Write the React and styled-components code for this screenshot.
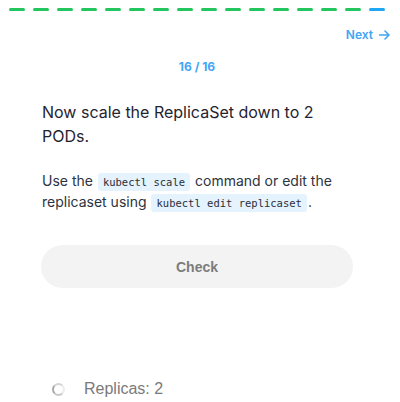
import React from "react";
import styled, { createGlobalStyle } from "styled-components";

const Global = createGlobalStyle`
  html, body { margin: 0; padding: 0; background: #ffffff; }
  body { font-family: Inter, "Noto Sans", sans-serif; -webkit-font-smoothing: antialiased; }
`;

const Page = styled.div`
  width: 400px;
  height: 402px;
  overflow: hidden;
  display: flex;
  flex-direction: column;
`;

const Progress = styled.div`
  display: flex;
  gap: 8px;
  padding: 8px 0 0 9px;
`;

const Dash = styled.span`
  width: 16px;
  height: 3px;
  border-radius: 2px;
  background: ${(p) => (p.$current ? "#1fa6f5" : "#22c55e")};
`;

const TopBar = styled.div`
  display: flex;
  justify-content: flex-end;
  padding: 16px 10px 0 0;
`;

const NextLink = styled.a`
  display: flex;
  align-items: center;
  gap: 6px;
  font-family: Inter, sans-serif;
  font-size: 12px;
  font-weight: 600;
  line-height: 16px;
  color: #42a5f5;
  text-decoration: none;
`;

const Content = styled.div`
  width: 312px;
  margin-left: 41px;
  display: flex;
  flex-direction: column;
`;

const Counter = styled.div`
  margin-top: 16px;
  text-align: center;
  font-size: 12px;
  font-weight: 700;
  line-height: 16px;
  color: #42a5f5;
`;

const Question = styled.h2`
  margin: 25px 0 0 1px;
  font-size: 16px;
  font-weight: 400;
  line-height: 24px;
  color: #1f2430;
`;

const Hint = styled.p`
  margin: 22px 0 0 1px;
  font-size: 14px;
  line-height: 21px;
  color: #2d3340;
`;

const Code = styled.code`
  display: inline-block;
  font-family: "DejaVu Sans Mono", monospace;
  font-size: 10.5px;
  line-height: 14px;
  color: #2a2f3a;
  background: #e4f3fd;
  border-radius: 3px;
  padding: 2px 5px;
  margin: 0 1px;
`;

const CheckButton = styled.button`
  margin-top: 33px;
  height: 43px;
  width: 312px;
  border: none;
  border-radius: 22px;
  background: #f3f3f3;
  color: #7c7c7c;
  font-family: "Liberation Sans", Arial, sans-serif;
  font-size: 14px;
  font-weight: 700;
`;

const Status = styled.div`
  margin-top: 91px;
  padding-left: 11px;
  display: flex;
  align-items: center;
  gap: 19px;
`;

const Spinner = styled.span`
  width: 9px;
  height: 9px;
  border-radius: 50%;
  border: 2px solid #ececec;
  border-left-color: #a9a9a9;
  border-bottom-color: #c9c9c9;
  border-top-color: #d4d4d4;
`;

const StatusText = styled.span`
  font-family: "Liberation Sans", Arial, sans-serif;
  font-size: 16px;
  line-height: 20px;
  color: #7a7a7a;
`;

export default function App() {
  const total = 16;
  const current = 16;
  return (
    <Page>
      <Global />
      <Progress>
        {Array.from({ length: total }, (_, i) => (
          <Dash key={i} $current={i === current - 1} />
        ))}
      </Progress>
      <TopBar>
        <NextLink href="#">
          Next
          <svg width="11" height="10" viewBox="0 0 11 10" fill="none">
            <path d="M0.5 5H10M6 1l4 4-4 4" stroke="#42a5f5" strokeWidth="1.6" strokeLinecap="round" strokeLinejoin="round" />
          </svg>
        </NextLink>
      </TopBar>
      <Content>
        <Counter>{current} / {total}</Counter>
        <Question>Now scale the ReplicaSet down to 2 PODs.</Question>
        <Hint>
          Use the <Code>kubectl scale</Code> command or edit the replicaset using{" "}
          <Code>kubectl edit replicaset</Code>.
        </Hint>
        <CheckButton>Check</CheckButton>
        <Status>
          <Spinner />
          <StatusText>Replicas: 2</StatusText>
        </Status>
      </Content>
    </Page>
  );
}
